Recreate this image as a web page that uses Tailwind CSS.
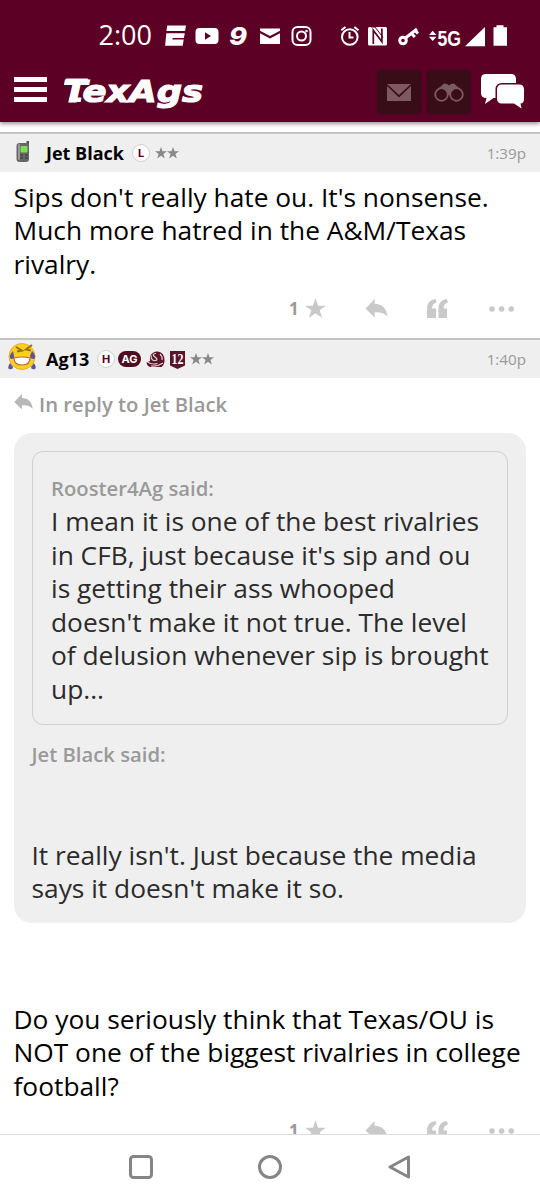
<!DOCTYPE html>
<html lang="en">
<head>
  <meta charset="UTF-8" />
  <meta name="viewport" content="width=device-width, initial-scale=1" />
  <title>TexAgs</title>
  <script src="https://cdn.jsdelivr.net/npm/@tailwindcss/browser@4"></script>
</head>
<body class="bg-white text-black w-[540px] h-[1200px] overflow-hidden flex flex-col font-['Open_Sans',sans-serif]">

  <!-- shared icons -->
  <svg class="hidden">
    <symbol id="star" viewBox="0 0 22 22"><path d="M11 0l2.700 8H22l-6.600 4.900L18 21l-7-4.900L4 21l2.600-8.100L0 8h8.300z" /></symbol>
    <symbol id="reply" viewBox="0 0 23 20"><path d="M0 10L9.500 0v5C17 5.400 22 9 23 18.500C19.500 14.500 15 13.600 9.500 14V19.500z" /></symbol>
    <symbol id="quote" viewBox="0 0 22 20"><path d="M0 20V10C0 4.500 3 .8 9 0l1 3.500C7 4.600 5.300 6.800 5.300 10H9.500V20zM12 20V10C12 4.500 15 .8 21 0l1 3.500C19 4.600 17.300 6.800 17.300 10H21V20z" /></symbol>
    <symbol id="dots" viewBox="0 0 26 6"><circle cx="3" cy="3" r="2.800" /><circle cx="12.600" cy="3" r="2.800" /><circle cx="22.200" cy="3" r="2.800" /></symbol>
  </svg>

  <header class="relative z-10 h-[122px] shrink-0 bg-[#5c0025] shadow-[0_2px_4px_rgba(0,0,0,0.4)]">
    <!-- phone status bar -->
    <svg class="block w-[540px] h-[70px]" viewBox="0 0 540 70" fill="#fff">
      <text x="98.500" y="45.300" font-family="Open Sans" font-size="26.500" textLength="53.500" lengthAdjust="spacingAndGlyphs">2:00</text>
      <path d="M167.300 25.500h18.700l-.9 5.600h-18.700zM166.300 33.300h18.500l-.9 4.700h-11.300l-.2 1.500h11.300l-1 6.200h-17.600z" />
      <path fill-rule="evenodd" d="M199.500 28h15q4 0 4 4v8q0 4-4 4h-15q-4 0-4-4v-8q0-4 4-4zM205 32.300v7.400l6-3.700z" />
      <text x="229" y="45" font-family="Inter" font-weight="800" font-style="italic" font-size="24" textLength="18" lengthAdjust="spacingAndGlyphs">9</text>
      <path d="M260 28.500h20v2.300l-10 5.300-10-5.300zM260 33.300l10 5.200 10-5.200v10.700h-20z" />
      <g fill="none" stroke="#fff" stroke-width="2">
        <rect x="292.500" y="27" width="18" height="18" rx="5" />
        <circle cx="301.500" cy="36" r="4.500" />
        <circle cx="349.800" cy="37" r="7.800" />
        <path d="M349.500 32v5.500h4M341.300 30.300l4.200-3.300M358.500 30.300l-4.200-3.300" />
      </g>
      <circle cx="306.500" cy="31" r="1.300" />
      <rect x="368" y="27" width="19" height="18.500" rx="1.500" />
      <path d="M373.300 44V30.300l8.600 11.500V28.500" fill="none" stroke="#5c0025" stroke-width="1.700" />
      <path d="M371 27l4 0 8 10.500" fill="none" stroke="#5c0025" stroke-width="1" />
      <g fill="none" stroke="#fff" stroke-width="3">
        <circle cx="403" cy="40.500" r="3.300" />
        <path d="M405.500 38l11.500-9M411.500 33.500l3.300 3.500M415 30.500l3 3" />
      </g>
      <path d="M429 35l3.700-4.200 3.700 4.200zM429 36.800h7.400l-3.700 4.200z" />
      <text x="437.500" y="46" font-family="Liberation Sans" font-weight="700" font-size="21.500" textLength="23.500" lengthAdjust="spacingAndGlyphs">5G</text>
      <path d="M485 27v19.300h-20zM493.500 27.300h3v-2h7v2h3.500v18.400h-13.500z" />
    </svg>

    <!-- app bar -->
    <div class="flex items-center h-[44px] pl-[14px] pr-[16px]">
      <button class="flex flex-col gap-[5px] mr-[17px] mb-[5px]">
        <span class="block w-[33px] h-[5px] bg-white"></span>
        <span class="block w-[33px] h-[5px] bg-white"></span>
        <span class="block w-[33px] h-[5px] bg-white"></span>
      </button>
      <svg class="w-[144px] h-[44px]" viewBox="0 0 144 44" fill="#fff" stroke="#fff">
        <!-- slab serifs of the T -->
        <path d="M2 8.500h22l-1.200 6.500h-2.500l-1-2H5.500l-1.500 2H.8zM5.500 27.500h12l-.8 4.500H4.700z" stroke="none" />
        <text x="-1" y="31.500" font-family="DejaVu Sans" font-weight="700" font-style="italic" font-size="31" stroke-width="1.200" textLength="140" lengthAdjust="spacingAndGlyphs">TexAgs</text>
      </svg>
      <div class="flex items-center ml-auto">
        <span class="flex items-center justify-center w-[44px] h-[44px] rounded bg-[#390d18] shadow-[0_0_2px_#390d18]">
          <svg class="w-6 h-[17px]" viewBox="0 0 24 17" fill="#7d5961"><path d="M0 0h24L12 11zM0 2l12 11.500L24 2v15H0z" /></svg>
        </span>
        <span class="flex items-center justify-center w-[44px] h-[44px] ml-[6px] rounded bg-[#390d18] shadow-[0_0_2px_#390d18]">
          <svg class="w-[30px] h-[19px]" viewBox="0 0 30 19" fill="none" stroke="#7d5961">
            <path d="M4 6l6-5.500 3 .5 2 1.500 2-1.500 3-.5 6 5.500-7 1-2 5h-4l-2-5z" fill="#7d5961" stroke="none" />
            <circle cx="7.500" cy="11.500" r="6.300" stroke-width="1.800" fill="#390d18" />
            <circle cx="22.500" cy="11.500" r="6.300" stroke-width="1.800" fill="#390d18" />
          </svg>
        </span>
        <svg class="w-[43px] h-[36px] ml-[10px] mb-[2px]" viewBox="0 0 43 36" fill="#fff">
          <path d="M5 1h25q5 0 5 5v14q0 5-5 5H12.500L4 31l1.500-6Q0 25 0 20V6q0-5 5-5z" />
          <path d="M21 11.500h17q5 0 5 5v9q0 5-3.500 5l1 5-7.500-5H21q-5 0-5-5v-9q0-5 5-5z" stroke="#5c0025" stroke-width="3" paint-order="stroke" />
        </svg>
      </div>
    </div>
  </header>

  <main class="h-[1012px] shrink-0 overflow-hidden pt-[10px]">

    <!-- post 1 -->
    <article class="h-[206px]">
      <div class="flex items-center h-[40px] pl-[14px] pr-[14px] border-t-2 border-[#c4c4c4] bg-[#efefef]">
        <svg class="w-[18px] h-[24px] mb-[2px]" viewBox="0 0 18 24">
          <path d="M12.500 1h2.500v6h-2.500z" fill="#555" />
          <rect x="2.500" y="3" width="12.500" height="19" rx="3" fill="#666" />
          <rect x="4" y="4" width="2" height="16" rx="1" fill="#999" />
          <rect x="6.500" y="6" width="7" height="6.500" rx="1" fill="#7be04c" />
          <path d="M6 15h3M11 15h3M6 18h3M11 18h3" stroke="#444" stroke-width="1.500" />
        </svg>
        <b class="ml-[14px] w-[79px] text-[18px] leading-none whitespace-nowrap">Jet Black</b>
        <span class="flex items-center justify-center ml-[7px] w-[18px] h-[18px] rounded-full border border-[#d0d0d0] bg-white font-['Inter'] text-[11px] font-bold text-[#500018]">L</span>
        <svg class="ml-[5px] w-[12px] h-[12px] fill-[#888]"><use href="#star" /></svg>
        <svg class="w-[12px] h-[12px] fill-[#888]"><use href="#star" /></svg>
        <span class="ml-auto text-[15.200px] text-[#999]">1:39p</span>
      </div>
      <p class="pt-[8.500px] pl-[13.500px] text-[26.320px] leading-[33.600px] whitespace-nowrap">Sips don't really hate ou. It's nonsense.<br>Much more hatred in the A&amp;M/Texas<br>rivalry.</p>
      <div class="flex items-center h-[24px] mt-[15.500px] pl-[289px] text-[#c9c9c9] fill-current">
        <span class="w-[16px] text-[17px] font-bold text-[#999]">1</span>
        <svg class="w-[21px] h-[21px]"><use href="#star" /></svg>
        <svg class="ml-[39px] w-[23px] h-[19px]"><use href="#reply" /></svg>
        <svg class="ml-[39px] w-[21px] h-[19px]"><use href="#quote" /></svg>
        <svg class="ml-[41px] w-[26px] h-[6px]"><use href="#dots" /></svg>
      </div>
    </article>

    <!-- post 2 -->
    <article>
      <div class="flex items-center h-[40px] pl-[7px] pr-[14px] border-t-2 border-[#c4c4c4] bg-[#efefef]">
        <svg class="w-[30px] h-[30px] mb-[5px]" viewBox="0 0 30 30">
          <circle cx="15" cy="14.500" r="13" fill="#fbd01c" stroke="#e8b020" />
          <path d="M9 5l6 3.500-5 1M25 3l-6 4.500 5 1" fill="none" stroke="#9a7010" stroke-width="2" />
          <path d="M7 16q8-2 16 0 0 7-8 7t-8-7z" fill="#fff" stroke="#b86840" stroke-width="1.200" />
          <path d="M6 9q-5 5-2 8 4 0 3-3zM25 9q5 5 2 8-4 0-4-3zM3 21q-3 5-1 6 4 1 4-2zM27 21q3 5 1 6-4 1-4-2z" fill="#6050a0" />
        </svg>
        <b class="ml-[9px] w-[44px] text-[18px] leading-none">Ag13</b>
        <span class="flex items-center justify-center ml-[7px] w-[18px] h-[18px] rounded-full border border-[#d0d0d0] bg-white font-['Inter'] text-[11px] font-bold text-[#500018]">H</span>
        <span class="flex items-center justify-center ml-[3px] w-[23px] h-[16px] rounded-full bg-[#500c1c] font-['Inter'] text-[11px] font-bold text-white">AG</span>
        <svg class="ml-[5px] mt-[1px] w-[19px] h-[17px]" viewBox="0 0 19 17">
          <path d="M4 5Q7 0 12 .5q6.500 1 6.500 9 0 4-3 6.500H4Q1 15 .5 11.500L4 10z" fill="#5c1428" />
          <path d="M5 4q0 6 4 5.500Q13 9 9 6t1-3.500M1.500 11q4 3 10 1.500M5 15q6 1 12-3M14 3q3 3 2 6" fill="none" stroke="#e0ccd0" stroke-width="1.200" />
        </svg>
        <svg class="ml-[5px] mt-[1px] w-[15px] h-[18px]" viewBox="0 0 15 18">
          <path d="M0 0h15v14.500L7.500 18 0 14.500z" fill="#5c1428" />
          <text x="1.500" y="12.500" font-family="Liberation Serif" font-weight="700" font-size="14.500" fill="#fff" textLength="12" lengthAdjust="spacingAndGlyphs">12</text>
        </svg>
        <svg class="ml-[5px] w-[12px] h-[12px] fill-[#888]"><use href="#star" /></svg>
        <svg class="w-[12px] h-[12px] fill-[#888]"><use href="#star" /></svg>
        <span class="ml-auto text-[15.200px] text-[#999]">1:40p</span>
      </div>

      <div class="flex items-center h-[55px] pl-[14px] pb-[2px] text-[20.250px] font-semibold text-[#999]">
        <svg class="w-[19px] h-[16px] mr-[6px] mb-[5px] fill-[#b8b8b8]"><use href="#reply" /></svg>
        In reply to Jet Black
      </div>

      <blockquote class="h-[490px] ml-[13.500px] mr-[14px] pt-[18px] px-[18px] rounded-[18px] bg-[#efefef] text-[26.320px] leading-[33.600px] text-[#2b2b2b] whitespace-nowrap">
        <blockquote class="h-[274px] pt-[19.500px] pl-[18.500px] rounded-[11px] border border-[#cfcfcf]">
          <p class="text-[20.250px] font-semibold text-[#999]">Rooster4Ag said:</p>
          <p>I mean it is one of the best rivalries<br>in CFB, just because it's sip and ou<br>is getting their ass whooped<br>doesn't make it not true. The level<br>of delusion whenever sip is brought<br>up...</p>
        </blockquote>
        <p class="mt-[13px] text-[20.250px] font-semibold text-[#999]">Jet Black said:</p>
        <p class="mt-[67px]">It really isn't. Just because the media<br>says it doesn't make it so.</p>
      </blockquote>

      <p class="mt-[79.500px] pl-[13.500px] text-[26.320px] leading-[33.600px] whitespace-nowrap">Do you seriously think that Texas/OU is<br>NOT one of the biggest rivalries in college<br>football?</p>
      <div class="flex items-center h-[24px] mt-[15.500px] pl-[289px] text-[#c9c9c9] fill-current">
        <span class="w-[16px] text-[17px] font-bold text-[#999]">1</span>
        <svg class="w-[21px] h-[21px]"><use href="#star" /></svg>
        <svg class="ml-[39px] w-[23px] h-[19px]"><use href="#reply" /></svg>
        <svg class="ml-[39px] w-[21px] h-[19px]"><use href="#quote" /></svg>
        <svg class="ml-[41px] w-[26px] h-[6px]"><use href="#dots" /></svg>
      </div>
    </article>
  </main>

  <!-- system navigation -->
  <nav class="flex h-[66px] shrink-0 items-center pl-[129px] pb-[2px] border-t border-[#dcdcdc] bg-white">
    <svg class="w-[24px] h-[24px]" viewBox="0 0 24 24" fill="none" stroke="#858585" stroke-width="3"><rect x="1.500" y="1.500" width="21" height="21" rx="3" /></svg>
    <svg class="ml-[105px] w-[24px] h-[24px]" viewBox="0 0 24 24" fill="none" stroke="#858585" stroke-width="3"><circle cx="12" cy="12" r="10.500" /></svg>
    <svg class="ml-[106px] w-[23px] h-[24px]" viewBox="0 0 23 24" fill="none" stroke="#858585" stroke-width="3" stroke-linejoin="round"><path d="M20.500 2v20L2 12z" /></svg>
  </nav>

</body>
</html>
